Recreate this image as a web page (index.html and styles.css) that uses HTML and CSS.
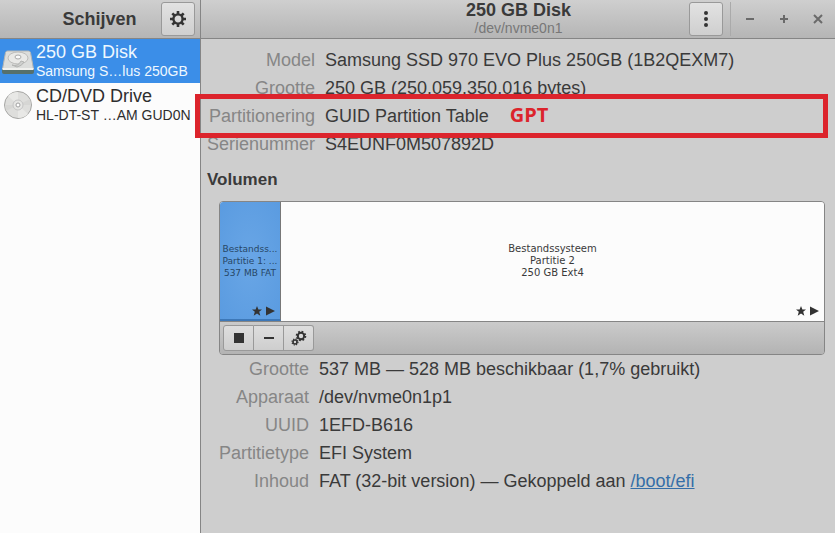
FILE: index.html
```html
<!DOCTYPE html>
<html lang="nl">

<head>
    <meta charset="UTF-8" />
    <meta name="viewport" content="width=device-width, initial-scale=1.0" />
    <title>Schijven</title>
    <link rel="stylesheet" href="styles.css">
</head>

<body>
    <div class="window">
        <aside class="sidebar">
            <header class="titlebar sidebar-header">
                <h1>Schijven</h1>
                <button class="tool" aria-label="Instellingen">
                    <svg width="18" height="18" viewBox="0 0 18 18">
                        <circle cx="9" cy="9" r="4.6" fill="none" stroke="#333" stroke-width="2.4" />
                        <path d="M9 1v3M9 14v3M1 9h3M14 9h3M3.3 3.3l2.2 2.2M12.5 12.5l2.2 2.2M3.3 14.7l2.2-2.2M12.5 5.5l2.2-2.2" stroke="#333" stroke-width="2.6" />
                    </svg>
                </button>
            </header>
            <ul class="drives">
                <li class="drive active">
                    <svg class="drive-icon" width="34" height="32" viewBox="0 0 34 32">
                        <path d="M7.500 6h21q1.500 0 2 1.500L33.500 24h-31L5.500 7.500Q6 6 7.500 6z" fill="#dcdddb" stroke="#b4b5b3" />
                        <path d="M2 24h32v3q0 2-2 2H4q-2 0-2-2z" fill="#56706c" />
                        <path d="M2.500 23h31v2h-31z" fill="#f1f1ee" />
                        <ellipse cx="18" cy="13" rx="10" ry="6" fill="#e9e9e7" stroke="#bcbcba" />
                        <ellipse cx="18" cy="12" rx="3" ry="2" fill="#fafafa" stroke="#aaa" />
                        <path d="M12 20q6 2 9-4l3 1q-2 4-7 5z" fill="#cfd0ce" stroke="#b3b4b2" />
                    </svg>
                    <div class="drive-text">
                        <p class="name">250 GB Disk</p>
                        <p class="desc">Samsung S…lus 250GB</p>
                    </div>
                </li>
                <li class="drive">
                    <svg class="drive-icon" width="34" height="32" viewBox="0 0 34 32">
                        <circle cx="18" cy="16" r="13.500" fill="#dededc" stroke="#a6a6a4" />
                        <path d="M18 16L8 7q4-4 10-4zM18 16l10 9q-4 4-10 4z" fill="#e8e8e6" />
                        <path d="M18 16L30 10l1 6zM18 16L6 22l-1-6z" fill="#d6d6d4" />
                        <circle cx="18" cy="16" r="5" fill="#e6e6e4" stroke="#c4c4c4" />
                        <circle cx="18" cy="16" r="2" fill="#fff" stroke="#a0a0a0" />
                    </svg>
                    <div class="drive-text">
                        <p class="name">CD/DVD Drive</p>
                        <p class="desc">HL-DT-ST …AM GUD0N</p>
                    </div>
                </li>
            </ul>
        </aside>

        <main class="main">
            <header class="titlebar main-header">
                <div class="heading">
                    <h2>250 GB Disk</h2>
                    <p>/dev/nvme0n1</p>
                </div>
                <button class="tool" aria-label="Menu">
                    <svg width="18" height="18" viewBox="0 0 18 18" fill="#333">
                        <circle cx="9" cy="3" r="2" />
                        <circle cx="9" cy="9" r="2" />
                        <circle cx="9" cy="15" r="2" />
                    </svg>
                </button>
                <div class="window-buttons">
                    <button aria-label="Minimaliseren">
                        <svg width="10" height="10" viewBox="0 0 10 10"><path d="M1 5h8" /></svg>
                    </button>
                    <button aria-label="Maximaliseren">
                        <svg width="10" height="10" viewBox="0 0 10 10"><path d="M1 5h8M5 1v8" /></svg>
                    </button>
                    <button aria-label="Sluiten">
                        <svg width="10" height="10" viewBox="0 0 10 10"><path d="M1 1l8 8M9 1l-8 8" /></svg>
                    </button>
                </div>
            </header>

            <div class="content">
                <dl class="info disk-info">
                    <dt>Model</dt>
                    <dd>Samsung SSD 970 EVO Plus 250GB (1B2QEXM7)</dd>
                    <dt>Grootte</dt>
                    <dd>250 GB (250.059.350.016 bytes)</dd>
                    <dt>Partitionering</dt>
                    <dd>GUID Partition Table <strong class="note">GPT</strong></dd>
                    <dt>Serienummer</dt>
                    <dd>S4EUNF0M507892D</dd>
                </dl>
                <!-- rood kader rond de partitionering -->
                <div class="highlight"></div>

                <h3>Volumen</h3>
                <div class="volumes">
                    <div class="partitions">
                        <div class="partition selected">
                            <p>Bestandss...</p>
                            <p>Partitie 1: ...</p>
                            <p>537 MB FAT</p>
                            <svg class="marks" width="24" height="10" viewBox="0 0 24 10">
                                <path d="M5 0l1.400 3.500H10L7.200 5.800 8.300 9.700 5 7.400 1.700 9.700 2.800 5.800 0 3.500h3.600zM14 0.500l9 4.500-9 4.500z" />
                            </svg>
                        </div>
                        <div class="partition">
                            <p>Bestandssysteem</p>
                            <p>Partitie 2</p>
                            <p>250 GB Ext4</p>
                            <svg class="marks" width="24" height="10" viewBox="0 0 24 10">
                                <path d="M5 0l1.400 3.500H10L7.200 5.800 8.300 9.700 5 7.400 1.700 9.700 2.800 5.800 0 3.500h3.600zM14 0.500l9 4.500-9 4.500z" />
                            </svg>
                        </div>
                    </div>
                    <div class="toolbar">
                        <button aria-label="Ontkoppelen">
                            <svg width="16" height="16" viewBox="0 0 16 16"><path d="M3 3h10v10H3z" fill="#333" /></svg>
                        </button>
                        <button aria-label="Verwijderen">
                            <svg width="16" height="16" viewBox="0 0 16 16"><path d="M3 7h10v2H3z" fill="#333" /></svg>
                        </button>
                        <button aria-label="Partitieopties">
                            <svg width="16" height="16" viewBox="0 0 16 16" fill="none" stroke="#333">
                                <circle cx="10" cy="6" r="3.200" stroke-width="2" />
                                <circle cx="10" cy="6" r="4.500" stroke-width="1.600" stroke-dasharray="1.770" />
                                <circle cx="4" cy="12" r="2" stroke-width="1.600" />
                                <circle cx="4" cy="12" r="3" stroke-width="1.200" stroke-dasharray="1.180" />
                            </svg>
                        </button>
                    </div>
                </div>

                <dl class="info volume-info">
                    <dt>Grootte</dt>
                    <dd>537 MB — 528 MB beschikbaar (1,7% gebruikt)</dd>
                    <dt>Apparaat</dt>
                    <dd>/dev/nvme0n1p1</dd>
                    <dt>UUID</dt>
                    <dd>1EFD-B616</dd>
                    <dt>Partitietype</dt>
                    <dd>EFI System</dd>
                    <dt>Inhoud</dt>
                    <dd>FAT (32-bit version) — Gekoppeld aan <a href="#">/boot/efi</a></dd>
                </dl>
            </div>
        </main>
    </div>
</body>

</html>
```

FILE: styles.css
```css
* {
    box-sizing: border-box;
}

body {
    margin: 0;
    font-family: "Liberation Sans", Arial, sans-serif;
    font-size: 18px;
    color: #3a3a3a;
    background: #cecece;
}

h1,
h2,
h3,
p,
ul,
dl,
dd {
    margin: 0;
    padding: 0;
}

button {
    display: flex;
    align-items: center;
    justify-content: center;
    padding: 0;
    border: none;
    background: none;
    cursor: pointer;
}

.window {
    display: flex;
    min-height: 100vh;
}

.titlebar {
    display: flex;
    align-items: center;
    height: 39px;
    border-bottom: 1px solid #858585;
    background: linear-gradient(#cfcfcf, #b5b5b5);
}

.tool {
    flex: none;
    width: 34px;
    height: 34px;
    border: 1px solid #999;
    border-radius: 3px;
    background: linear-gradient(#e2e2e2, #cfcfcf);
}

/* 侧边栏 */
.sidebar {
    flex: none;
    width: 201px;
    border-right: 1px solid #858585;
    background: #fcfcfc;
}

.sidebar-header {
    padding-right: 5px;
}

.sidebar-header h1 {
    flex: 1;
    padding-left: 38px;
    font-size: 18px;
    text-align: center;
}

.drives {
    list-style: none;
}

.drive {
    display: flex;
    align-items: center;
    gap: 2px;
    height: 44px;
    color: #2e2e2e;
}

.drive.active {
    background: #3b8ee8;
    color: #eef8ff;
}

.drive-icon {
    flex: none;
}

.drive-text {
    white-space: nowrap;
}

.name {
    line-height: 20px;
}

.desc {
    font-size: 14px;
    line-height: 18px;
}

/* 主区域 */
.main {
    flex: 1;
    min-width: 0;
}

.heading {
    flex: 1;
    padding-left: 147px;
    text-align: center;
}

.heading h2 {
    font-size: 18px;
    line-height: 18px;
}

.heading p {
    font-size: 14px;
    line-height: 18px;
    color: #777;
}

.window-buttons {
    display: flex;
    margin-left: 7px;
    padding-left: 2px;
    border-left: 1px solid #aaa;
}

.window-buttons button {
    width: 34px;
    height: 34px;
}

.window-buttons path {
    stroke: #6a6a6a;
    stroke-width: 2;
}

.content {
    position: relative;
    padding: 7px 10px 0 6px;
}

.info {
    display: grid;
    column-gap: 10px;
    line-height: 28px;
}

.info dt {
    text-align: right;
    color: #868686;
}

.disk-info {
    grid-template-columns: 108px 1fr;
}

.volume-info {
    grid-template-columns: 102px 1fr;
}

.note {
    margin-left: 16px;
    font-family: "Open Sans", sans-serif;
    font-size: 20px;
    line-height: 20px;
    color: #dc242c;
}

.highlight {
    position: absolute;
    top: 55px;
    left: -6px;
    right: 7px;
    height: 44px;
    border: 5px solid #dc242c;
}

h3 {
    margin-top: 8px;
    font-size: 17px;
    line-height: 28px;
}

.volumes {
    margin: 7px 0 0 12px;
    border: 1px solid #858585;
    border-radius: 4px;
    overflow: hidden;
}

.partitions {
    display: flex;
    height: 120px;
    border-bottom: 1px solid #858585;
    background: #fcfcfc;
}

.partition {
    position: relative;
    flex: 1;
    display: flex;
    flex-direction: column;
    align-items: center;
    justify-content: center;
    min-width: 0;
    padding-bottom: 2px;
    font-family: "DejaVu Sans", sans-serif;
    font-size: 10px;
    line-height: 12px;
    white-space: nowrap;
}

.partition.selected {
    flex: none;
    width: 61px;
    padding-bottom: 0;
    border-right: 1px solid #777;
    border-bottom: 2px solid #3d78b8;
    background: radial-gradient(#69a6e6, #5a9be0);
    color: #274766;
    font-size: 9px;
}

.marks {
    position: absolute;
    right: 4px;
    bottom: 5px;
    fill: #333;
}

.selected .marks {
    bottom: 3px;
}

.toolbar {
    display: flex;
    padding: 3px;
    background: linear-gradient(#cbcbcb, #b3b3b3);
}

.toolbar button {
    width: 30px;
    height: 26px;
    border: 1px solid #999;
    border-left-width: 0;
    background: linear-gradient(#dedede, #cecece);
}

.toolbar button:first-child {
    width: 31px;
    border-left-width: 1px;
    border-radius: 3px 0 0 3px;
}

.toolbar button:last-child {
    border-radius: 0 3px 3px 0;
}

a {
    color: #356ea8;
}
```
